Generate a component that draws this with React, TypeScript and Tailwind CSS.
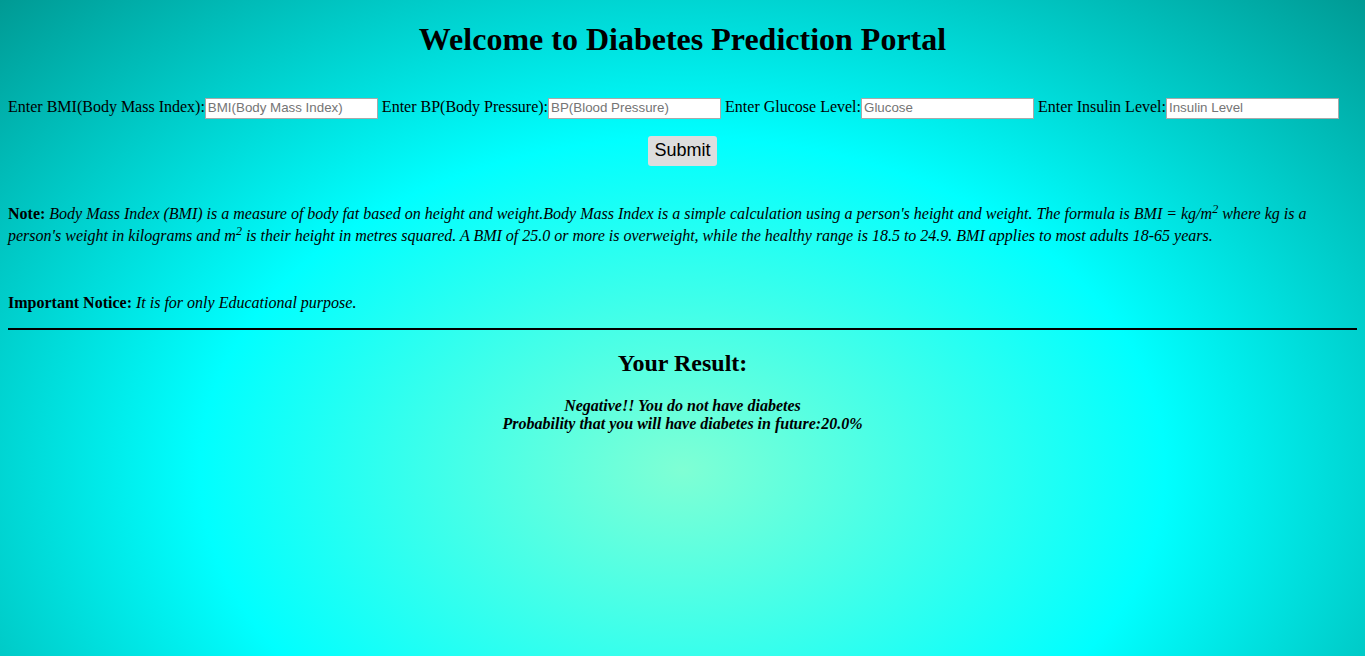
import React from "react";

const serif = "font-['Times_New_Roman','Liberation_Serif',serif]";

function Field({ label, placeholder }: { label: string; placeholder: string }) {
  return (
    <>
      <span>{label}</span>
      <input
        type="text"
        placeholder={placeholder}
        className="w-[173px] h-[21px] bg-white border border-[#a9a9a9] px-[2px] py-[1px] text-[13.33px] font-['Arial','Liberation_Sans',sans-serif] text-black placeholder:text-[#757575] align-middle outline-none"
      />{" "}
    </>
  );
}

export default function App() {
  return (
    <div
      className={`min-h-[656px] ${serif} text-black text-[16px] px-[8px] bg-[radial-gradient(ellipse_965px_665px_at_50%_470px,#7fffd4_0%,#00ffff_50%,#009a94_100%)]`}
    >
      <h1 className="text-[32px] font-bold text-center leading-[37px] pt-[21px] m-0">
        Welcome to Diabetes Prediction Portal
      </h1>
      <div className="mt-[38px] leading-[22px] whitespace-nowrap">
        <Field label="Enter BMI(Body Mass Index):" placeholder="BMI(Body Mass Index)" />
        <Field label="Enter BP(Body Pressure):" placeholder="BP(Blood Pressure)" />
        <Field label="Enter Glucose Level:" placeholder="Glucose" />
        <Field label="Enter Insulin Level:" placeholder="Insulin Level" />
      </div>
      <div className="flex justify-center mt-[17px]">
        <button className="h-[30px] px-[6px] rounded-[3px] bg-[#dddddd] text-[18px] font-['Arial','Liberation_Sans',sans-serif] leading-[21px] text-black">
          Submit
        </button>
      </div>
      <p className="mt-[37px] leading-[22px] italic">
        <b className="not-italic font-bold">Note:</b> Body Mass Index (BMI) is a measure of body fat based on height and
        weight.Body Mass Index is a simple calculation using a person's height and weight. The formula is BMI = kg/m
        <sup className="text-[12px] leading-none">2</sup> where kg is a person's weight in kilograms and m
        <sup className="text-[12px] leading-none">2</sup> is their height in metres squared. A BMI of 25.0 or more is
        overweight, while the healthy range is 18.5 to 24.9. BMI applies to most adults 18-65 years.
      </p>
      <p className="mt-[45px] leading-[22px]">
        <b>Important Notice:</b> <i>It is for only Educational purpose.</i>
      </p>
      <div className="mt-[14px] h-[2px] bg-black" />
      <h2 className="text-[24px] font-bold text-center leading-[28px] mt-[19px]">Your Result:</h2>
      <div className="text-center font-bold italic leading-[18px] mt-[20px]">
        <div>Negative!! You do not have diabetes</div>
        <div>Probability that you will have diabetes in future:20.0%</div>
      </div>
    </div>
  );
}
